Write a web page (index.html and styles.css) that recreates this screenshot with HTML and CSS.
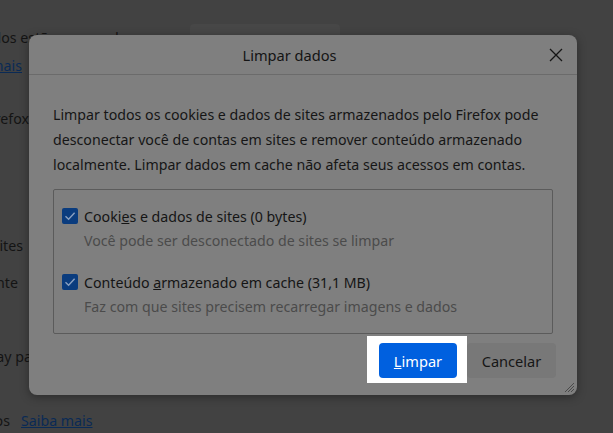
FILE: index.html
```html
<!DOCTYPE html>
<html lang="pt-BR">
<head>
<meta charset="utf-8">
<title>Limpar dados</title>
<link rel="stylesheet" href="styles.css">
</head>
<body>
<div class="page">
  <div class="ghost-btn"></div>
  <p class="pline l1">Dados armazenados est&atilde;o ocupando</p>
  <p class="pline l2"><a href="#">Saiba mais</a></p>
  <p class="pline l3">Limpar dados do Firefox</p>
  <p class="pline l4">Excluir cookies e dados de sites</p>
  <p class="pline l5">Abrir automaticamente</p>
  <p class="pline l6">Sempre pedir para usar Pay pa</p>
  <p class="pline l7">Bloquear an&uacute;ncios</p>
  <a class="pline l8" href="#">Saiba mais</a>
</div>

<div class="dialog">
  <div class="dlg-head">
    <span class="dlg-title">Limpar dados</span>
    <button class="close" aria-label="Fechar">
      <svg width="14" height="14" viewBox="0 0 14 14"><path d="M1 1 L13 13 M13 1 L1 13" stroke="#161616" stroke-width="1.3" fill="none"/></svg>
    </button>
  </div>
  <div class="dlg-body">
    <p class="desc">Limpar todos os cookies e dados de sites armazenados pelo Firefox pode desconectar voc&ecirc; de contas em sites e remover conte&uacute;do armazenado localmente. Limpar dados em cache n&atilde;o afeta seus acessos em contas.</p>
    <div class="group">
      <div class="opt">
        <span class="check"><svg width="16" height="16" viewBox="0 0 16 16"><path d="M3.5 8.2 L6.6 11.2 L12.6 4.8" stroke="#8aa0c0" stroke-width="1.4" fill="none"/></svg></span>
        <div class="opt-text">
          <div class="opt-label">Cooki<u>e</u>s e dados de sites (0 bytes)</div>
          <div class="opt-sub">Voc&ecirc; pode ser desconectado de sites se limpar</div>
        </div>
      </div>
      <div class="opt">
        <span class="check"><svg width="16" height="16" viewBox="0 0 16 16"><path d="M3.5 8.2 L6.6 11.2 L12.6 4.8" stroke="#8aa0c0" stroke-width="1.4" fill="none"/></svg></span>
        <div class="opt-text">
          <div class="opt-label">Conte&uacute;do <u>a</u>rmazenado em cache (31,1 MB)</div>
          <div class="opt-sub">Faz com que sites precisem recarregar imagens e dados</div>
        </div>
      </div>
    </div>
  </div>
  <div class="dlg-foot">
    <div class="highlight"><button class="btn primary"><u>L</u>impar</button></div>
    <button class="btn secondary">Cancelar</button>
  </div>
  <span class="grip">
    <svg width="12" height="12" viewBox="0 0 12 12"><path d="M11 2 L2 11 M11 5 L5 11 M11 8 L8 11" stroke="#4a4a4a" stroke-width="1" fill="none"/></svg>
  </span>
</div>
</body>
</html>
```

FILE: styles.css
```css
* { box-sizing: border-box; }
html, body { margin: 0; padding: 0; }
body {
  width: 613px;
  height: 433px;
  overflow: hidden;
  background: #424242;
  font-family: "Noto Sans", "Open Sans", sans-serif;
  font-size: 14.2px;
  color: #151515;
  position: relative;
}
.page {
  position: relative;
  height: 433px;
}
.ghost-btn {
  position: absolute;
  left: 190px;
  top: 24px;
  width: 150px;
  height: 16px;
  background: #474747;
  border-radius: 4px;
}
.pline {
  position: absolute;
  margin: 0;
  white-space: nowrap;
  line-height: 20px;
  color: #141414;
}
.pline a, a.pline { color: #0a2a55; }
.l1 { left: -120px; top: 28px; }
.l2 { right: 591px; top: 56px; }
.l3 { right: 584px; top: 109px; }
.l4 { right: 590px; top: 236px; }
.l5 { right: 595px; top: 273px; }
.l6 { left: -173px; top: 347px; }
.l7 { right: 603px; top: 411px; }
.l8 { left: 21px; top: 411px; }

.dialog {
  position: absolute;
  left: 29px;
  top: 35px;
  width: 548px;
  height: 360px;
  background: #7f7f7f;
  border-radius: 8px;
  box-shadow: 0 2px 10px rgba(0,0,0,0.35);
  display: flex;
  flex-direction: column;
}
.dlg-head {
  height: 40px;
  border-bottom: 1px solid #6b6b6b;
  display: flex;
  align-items: center;
  justify-content: center;
  padding-right: 27px;
  position: relative;
}
.dlg-title {
  font-size: 14.6px;
  color: #141414;
}
.close {
  position: absolute;
  right: 14px;
  top: 13px;
  width: 14px;
  height: 14px;
  padding: 0;
  border: 0;
  background: none;
  display: flex;
}
.dlg-body {
  padding: 27px 24px 0 24px;
}
.desc {
  margin: 0;
  line-height: 25px;
  color: #161616;
  width: 500px;
}
.group {
  margin-top: 12px;
  width: 500px;
  height: 145px;
  border: 1px solid #5b5b5b;
  border-radius: 2px;
  padding: 18px 8px 0 8px;
  display: flex;
  flex-direction: column;
  gap: 21px;
}
.opt {
  display: flex;
  gap: 6px;
  align-items: flex-start;
}
.check {
  width: 16px;
  height: 16px;
  background: #0a3c7e;
  border-radius: 2px;
  flex: none;
  display: flex;
}
.opt-text { margin-top: -4px; }
.opt-label {
  line-height: 25px;
  color: #151515;
}
.opt-sub {
  line-height: 24px;
  color: #4b4b4b;
}
.dlg-foot {
  margin-top: auto;
  display: flex;
  justify-content: flex-end;
  padding: 0 21px 17px 0;
}
.highlight {
  background: #ffffff;
  padding: 7px 10px 5px 12px;
  margin: -7px 0 -5px 0;
}
.btn {
  height: 35px;
  border: 0;
  border-radius: 4px;
  font-family: "Noto Sans", "Open Sans", sans-serif;
  font-size: 14.6px;
  padding: 0;
}
.primary {
  width: 78px;
  background: #0060df;
  color: #ffffff;
}
.secondary {
  width: 89px;
  background: #787878;
  color: #161616;
}
.grip {
  position: absolute;
  right: 2px;
  bottom: 2px;
  width: 12px;
  height: 12px;
  display: flex;
}
```
